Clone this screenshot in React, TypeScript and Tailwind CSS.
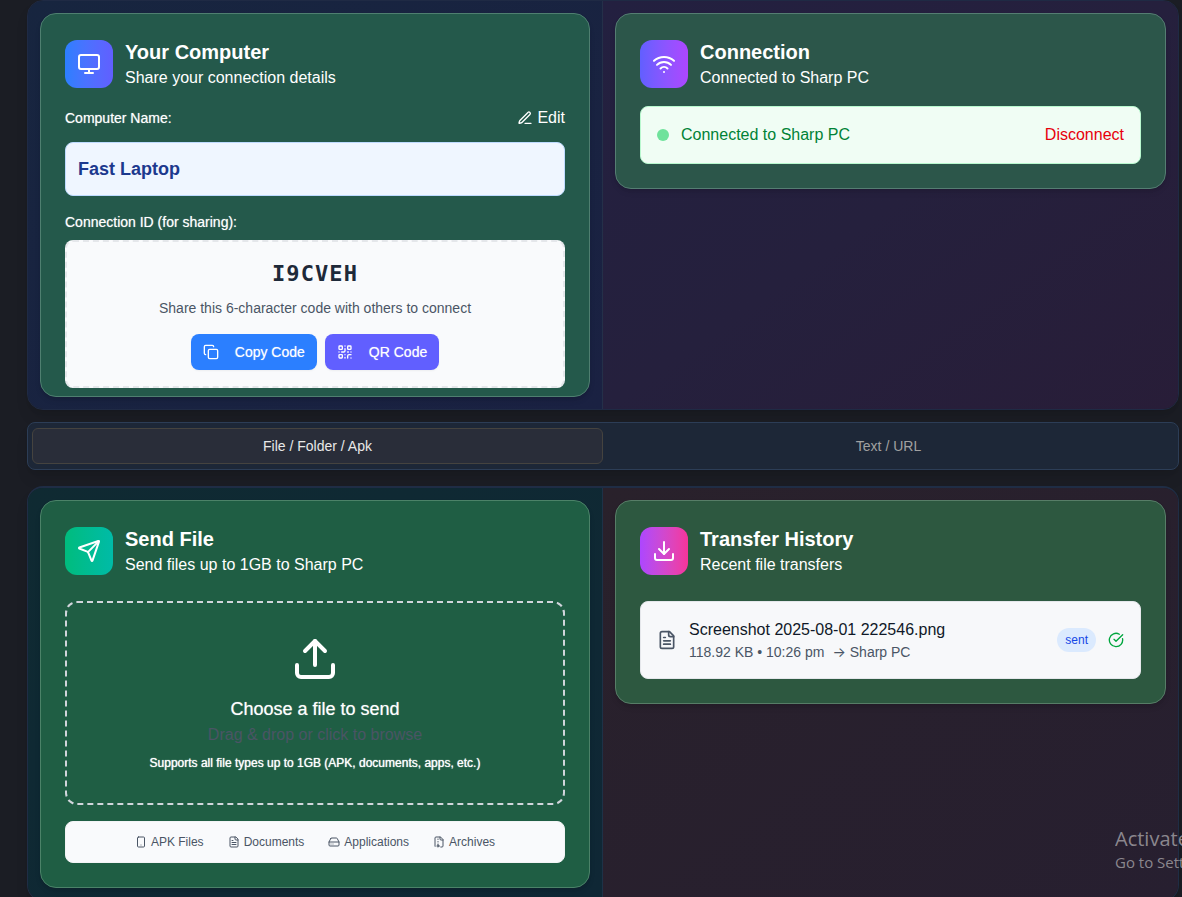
import { useState } from "react";
import type { ReactNode } from "react";
import {
  CircleCheckBig,
  Copy,
  Download,
  HardDrive,
  Monitor,
  QrCode,
  Send,
  Smartphone,
  Upload,
  Wifi,
} from "lucide-react";

function LineIcon({ className, children }: { className: string; children: ReactNode }) {
  return (
    <svg
      viewBox="0 0 24 24"
      fill="none"
      stroke="currentColor"
      strokeWidth="2"
      strokeLinecap="round"
      strokeLinejoin="round"
      aria-hidden="true"
      className={className}
    >
      {children}
    </svg>
  );
}

function PenIcon({ className }: { className: string }) {
  return (
    <LineIcon className={className}>
      <path d="M12 20h9" />
      <path d="M16.376 3.622a1 1 0 0 1 3.002 3.002L7.368 18.635a2 2 0 0 1-.855.506l-2.872.838a.5.5 0 0 1-.62-.62l.838-2.872a2 2 0 0 1 .506-.854z" />
    </LineIcon>
  );
}

function DocumentIcon({ className }: { className: string }) {
  return (
    <LineIcon className={className}>
      <path d="M15 2H6a2 2 0 0 0-2 2v16a2 2 0 0 0 2 2h12a2 2 0 0 0 2-2V7Z" />
      <path d="M14 2v4a2 2 0 0 0 2 2h4" />
      <path d="M10 9H8" />
      <path d="M16 13H8" />
      <path d="M16 17H8" />
    </LineIcon>
  );
}

function ArchiveIcon({ className }: { className: string }) {
  return (
    <LineIcon className={className}>
      <path d="M10 12v-1" />
      <path d="M10 18v-2" />
      <path d="M10 7V6" />
      <path d="M14 2v4a2 2 0 0 0 2 2h4" />
      <path d="M15.5 22H18a2 2 0 0 0 2-2V7l-5-5H6a2 2 0 0 0-2 2v16a2 2 0 0 0 .274 1.01" />
      <circle cx="10" cy="20" r="2" />
    </LineIcon>
  );
}

function CardHeader({
  icon,
  gradient,
  title,
  subtitle,
}: {
  icon: ReactNode;
  gradient: string;
  title: string;
  subtitle: string;
}) {
  return (
    <header className="flex items-center gap-3 text-white">
      <div className={`flex size-12 shrink-0 items-center justify-center rounded-xl bg-linear-to-r ${gradient}`}>
        {icon}
      </div>
      <div>
        <h2 className="text-xl leading-7 font-bold">{title}</h2>
        <p className="text-base leading-6">{subtitle}</p>
      </div>
    </header>
  );
}

function ComputerCard() {
  return (
    <section className="rounded-2xl border border-[#4f7f70] bg-[#24594b] px-6 pt-6 pb-2 shadow-md">
      <CardHeader
        icon={<Monitor className="size-6" />}
        gradient="from-[#2b7fff] to-[#615fff]"
        title="Your Computer"
        subtitle="Share your connection details"
      />
      <div className="mt-4 flex items-center justify-between text-white">
        <span className="text-sm font-medium text-shadow-[0_0_1px_#ffffff99]">Computer Name:</span>
        <button type="button" className="flex items-center gap-1 text-base leading-6">
          <PenIcon className="size-4" />
          Edit
        </button>
      </div>
      <div className="mt-3 rounded-lg border border-[#bedbff] bg-[#eff6ff] p-3 text-lg leading-7 font-bold text-[#1c398e]">
        Fast Laptop
      </div>
      <p className="mt-4 text-sm font-medium text-white text-shadow-[0_0_1px_#ffffff99]">
        Connection ID (for sharing):
      </p>
      <div className="mt-2 rounded-lg border-2 border-dashed border-[#e5e7eb] bg-[#f9fafc] p-4 text-center">
        <p className="font-['DejaVu_Sans_Mono',monospace] text-[22px] leading-8 font-bold tracking-wider text-[#1e2939]">
          I9CVEH
        </p>
        <p className="mt-2 text-sm text-[#4a5565]">Share this 6-character code with others to connect</p>
        <div className="mt-4 flex justify-center gap-2">
          <button
            type="button"
            className="flex h-9 items-center gap-4 rounded-lg bg-[#2b7fff] px-3 text-sm font-medium text-white shadow-xs text-shadow-[0_0_1px_#ffffff99]"
          >
            <Copy className="size-4" />
            Copy Code
          </button>
          <button
            type="button"
            className="flex h-9 items-center gap-4 rounded-lg bg-[#615fff] px-3 text-sm font-medium text-white shadow-xs text-shadow-[0_0_1px_#ffffff99]"
          >
            <QrCode className="size-4" />
            QR Code
          </button>
        </div>
      </div>
    </section>
  );
}

function ConnectionCard() {
  return (
    <section className="rounded-2xl border border-[#557d72] bg-[#2c564a] p-6 shadow-md">
      <CardHeader
        icon={<Wifi className="size-6" />}
        gradient="from-[#615fff] to-[#ad46ff]"
        title="Connection"
        subtitle="Connected to Sharp PC"
      />
      <div className="mt-4 flex items-center justify-between rounded-lg border border-[#b9f8cf] bg-[#f0fdf4] p-4 text-base leading-6">
        <div className="flex items-center gap-3 text-[#008236]">
          <span className="size-3 rounded-full bg-[#6fe29b]" />
          Connected to Sharp PC
        </div>
        <button type="button" className="text-[#e7000b]">
          Disconnect
        </button>
      </div>
    </section>
  );
}

const fileKinds = [
  { label: "APK Files", Icon: Smartphone },
  { label: "Documents", Icon: DocumentIcon },
  { label: "Applications", Icon: HardDrive },
  { label: "Archives", Icon: ArchiveIcon },
];

function SendCard() {
  return (
    <section className="rounded-2xl border border-[#4b8268] bg-[#1f5e44] p-6 shadow-md">
      <CardHeader
        icon={<Send className="size-6" />}
        gradient="from-[#00bc7d] to-[#00bba7]"
        title="Send File"
        subtitle="Send files up to 1GB to Sharp PC"
      />
      <button
        type="button"
        className="mt-6 flex w-full flex-col items-center rounded-xl border-2 border-dashed border-[#d1d5dc] p-8 text-white"
      >
        <Upload className="size-12" />
        <span className="mt-3 text-lg leading-7 font-medium text-shadow-[0_0_1px_#ffffff99]">
          Choose a file to send
        </span>
        <span className="text-base leading-6 text-[#4a5565]">Drag &amp; drop or click to browse</span>
        <span className="mt-2 text-xs leading-4 font-medium text-shadow-[0_0_1px_#ffffff]">
          Supports all file types up to 1GB (APK, documents, apps, etc.)
        </span>
      </button>
      <ul className="mt-4 flex justify-center gap-6 rounded-lg border border-[#f3f4f6] bg-[#f9fafc] p-3 text-xs leading-4 text-[#4a5565]">
        {fileKinds.map(({ label, Icon }) => (
          <li key={label} className="flex items-center gap-1">
            <Icon className="size-3" />
            {label}
          </li>
        ))}
      </ul>
    </section>
  );
}

function HistoryCard() {
  return (
    <section className="rounded-2xl border border-[#577d67] bg-[#2d5840] p-6 shadow-md">
      <CardHeader
        icon={<Download className="size-6" />}
        gradient="from-[#ad46ff] to-[#f6339a]"
        title="Transfer History"
        subtitle="Recent file transfers"
      />
      <div className="mt-6 flex items-center gap-3 rounded-lg border border-[#e5e7eb] bg-[#f7f8fa] p-4">
        <DocumentIcon className="size-5 shrink-0 text-[#4a5565]" />
        <div className="min-w-0 flex-1">
          <p className="truncate text-base leading-6 text-[#101828]">Screenshot 2025-08-01 222546.png</p>
          <p className="flex text-sm text-[#4a5565]">
            118.92 KB • 10:26 pm
            <span className="ml-2 flex gap-1">
              <span className="font-[Inter,sans-serif]">→</span>
              Sharp PC
            </span>
          </p>
        </div>
        <span className="rounded-full bg-[#dbeafe] px-2 py-1 text-xs leading-4 text-[#1447e6]">sent</span>
        <CircleCheckBig className="size-4 shrink-0 text-[#00a63e]" />
      </div>
    </section>
  );
}

const tabs = ["File / Folder / Apk", "Text / URL"];

export default function App() {
  const [active, setActive] = useState(0);

  return (
    <div className="relative h-screen overflow-hidden bg-[#1b1d24] pr-[3px] pl-[27px] font-['Liberation_Sans',Arial,sans-serif]">
      <div className="grid grid-cols-2 overflow-hidden rounded-2xl border border-[#1f2a44] shadow-lg">
        <div className="border-r border-[#243049] bg-linear-to-br from-[#17253f] to-[#1a2142] p-3">
          <ComputerCard />
        </div>
        <div className="bg-linear-to-br from-[#232040] via-[#25203d] to-[#281d38] p-3">
          <ConnectionCard />
        </div>
      </div>

      <div
        role="tablist"
        className="mt-3 grid h-12 grid-cols-2 items-center rounded-lg border border-[#2c3d56] bg-[#1d2737] px-1 shadow-lg"
      >
        {tabs.map((label, index) => (
          <button
            key={label}
            type="button"
            role="tab"
            aria-selected={active === index}
            onClick={() => setActive(index)}
            className={
              active === index
                ? "h-9 rounded-md border border-[#45433f] bg-[#292d39] text-sm font-medium text-[#e8e8e8]"
                : "h-9 rounded-md border border-transparent text-sm font-medium text-[#a1a1a1]"
            }
          >
            {label}
          </button>
        ))}
      </div>

      <div className="mt-4 grid grid-cols-2 overflow-hidden rounded-2xl border border-t-2 border-[#1f2d45] shadow-lg">
        <div className="border-r border-[#1d3247] bg-linear-to-br from-[#0f2a32] to-[#0f2735] p-3">
          <SendCard />
        </div>
        <div className="bg-linear-to-br from-[#29212b] to-[#271f30] p-3">
          <HistoryCard />
        </div>
      </div>

      <div className="pointer-events-none absolute right-0 bottom-6 w-[67px] overflow-hidden font-['Open_Sans','Noto_Sans',sans-serif] whitespace-nowrap text-[#8b878e]">
        <p className="text-xl leading-6">Activate Windows</p>
        <p className="text-[15px] leading-[22px]">Go to Settings to activate Windows.</p>
      </div>
    </div>
  );
}
